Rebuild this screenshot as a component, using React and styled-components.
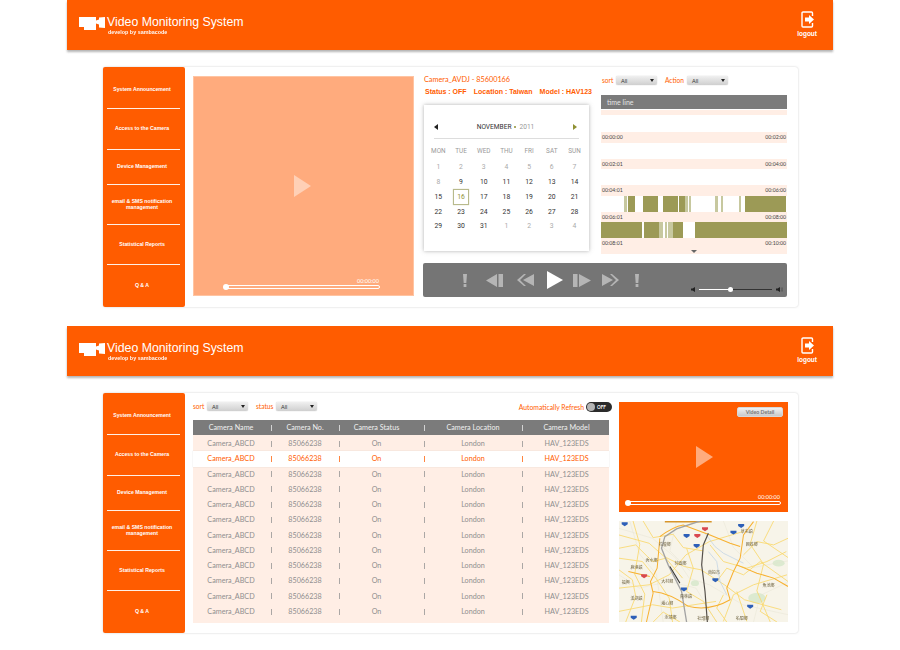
import React from 'react'
import styled, { createGlobalStyle } from 'styled-components'

const ORANGE = '#ff5c00'
const PINK = '#ffeee5'
const GOTHIC = `'Lato', 'Open Sans', sans-serif`
const ARIAL = `'Liberation Sans', Arial, sans-serif`

const GlobalStyle = createGlobalStyle`
  html, body {
    margin: 0;
    padding: 0;
    background: #fff;
    font-family: ${ARIAL};
  }
  * {
    box-sizing: border-box;
  }
`

const Page = styled.div`
  width: 900px;
  height: 650px;
  padding: 0 67px;
  overflow: hidden;
`

const Section = styled.section`
  margin-bottom: 19px;
`

const Header = styled.header`
  height: 50px;
  background: ${ORANGE};
  box-shadow: 0 2px 2px rgba(90, 90, 90, 0.45);
  display: flex;
  align-items: center;
  justify-content: space-between;
  padding: 0 16px 0 12px;
`

const Brand = styled.div`
  display: flex;
  align-items: flex-start;
  gap: 2px;
  margin-top: 1px;
`

const BrandLogo = styled.svg`
  display: block;
  flex: none;
  margin-top: 1px;
`

const BrandText = styled.div`
  color: #fff;
  line-height: 1;
`

const BrandTitle = styled.div`
  font-size: 12.3px;
  line-height: 13px;
`

const BrandSub = styled.div`
  font-size: 5.4px;
  font-weight: 700;
  line-height: 6px;
  margin: 0 0 0 1px;
  opacity: 0.95;
`

const Logout = styled.div`
  display: flex;
  flex-direction: column;
  align-items: center;
  color: #fff;
  font-size: 6.5px;
  line-height: 7px;
  font-weight: 700;
  gap: 2px;
  margin-top: -2px;
`

const Panel = styled.div`
  width: 695px;
  height: 240px;
  margin: 17px 0 0 36px;
  display: flex;
  border-radius: 3px;
  box-shadow: 0 0 2px rgba(150, 150, 150, 0.5);
  background: #fff;
`

const Sidebar = styled.nav`
  width: 82px;
  flex: none;
  background: ${ORANGE};
  border-radius: 2px;
  display: flex;
  flex-direction: column;
  padding: 0 5px 0 4px;
`

const SideItem = styled.a`
  height: ${({ $h }) => $h}px;
  display: flex;
  align-items: center;
  justify-content: center;
  text-align: center;
  color: #fff;
  font-size: 5.2px;
  font-weight: 700;
  line-height: 1;
  padding-top: ${({ $shift }) => $shift || 0}px;
  padding-right: 3px;
  border-bottom: ${({ $last }) => ($last ? 'none' : '1px solid #fff0e6')};
`

const Content = styled.div`
  flex: 1;
  display: flex;
  gap: ${({ $gap }) => $gap}px;
  padding: 9px 10px 9px 8px;
`

const VideoBox = styled.div`
  width: ${({ $w }) => $w}px;
  height: ${({ $h }) => $h}px;
  flex: none;
  display: flex;
  flex-direction: column;
  background: ${({ $bg }) => $bg};
  border: 1px solid ${({ $line }) => $line};
  padding: ${({ $pad }) => $pad};
  position: relative;
`

const PlayMark = styled.svg`
  display: block;
  margin: ${({ $top }) => $top}px auto 0;
`

const Spacer = styled.div`
  flex: 1;
`

const TimeCode = styled.div`
  align-self: flex-end;
  color: #fff;
  font-family: ${GOTHIC};
  font-size: 5.5px;
  line-height: 6px;
  margin: 0 1px 1px 0;
`

const Track = styled.div`
  height: 4px;
  border: 1px solid #fff;
  border-radius: 2px;
  position: relative;
`

const TrackKnob = styled.span`
  position: absolute;
  left: -3px;
  top: -2px;
  width: 6px;
  height: 6px;
  border-radius: 50%;
  background: #fff;
`

const DetailButton = styled.button`
  position: absolute;
  top: 4px;
  right: 4px;
  width: 46px;
  height: 10px;
  padding: 0;
  border: 1px solid #d8d8d8;
  border-radius: 2px;
  background: linear-gradient(#f2f2f2, #c9c9c9);
  color: #777;
  font-family: ${GOTHIC};
  font-size: 5.2px;
  font-weight: 700;
  line-height: 8px;
`

const Main = styled.div`
  width: 364px;
  display: flex;
  flex-direction: column;
  gap: 7px;
`

const MainTop = styled.div`
  display: flex;
  gap: 9px;
  height: 180px;
`

const InfoCol = styled.div`
  width: 169px;
  flex: none;
`

const InfoTitle = styled.div`
  color: ${ORANGE};
  font-family: ${GOTHIC};
  font-size: 7.3px;
  line-height: 9px;
  margin: -1px 0 0 1px;
`

const InfoLine = styled.div`
  display: flex;
  justify-content: space-between;
  color: ${ORANGE};
  font-size: 7px;
  font-weight: 700;
  line-height: 9px;
  margin: 3px 0 0 2px;
`

const Calendar = styled.div`
  width: 165px;
  height: 146px;
  margin: 9px 0 0 1px;
  background: #fff;
  box-shadow: 0 0 4px rgba(110, 110, 110, 0.55);
  padding: 17px 10px 0;
  font-family: 'Roboto', sans-serif;
`

const CalHead = styled.div`
  display: flex;
  align-items: center;
  justify-content: space-between;
  height: 10px;
  padding-right: 2px;
  font-size: 6.6px;
  color: #333;
`

const CalMonth = styled.div`
  display: flex;
  align-items: center;
  gap: 3px;
`

const CalYear = styled.span`
  color: #999;
`

const CalDot = styled.span`
  width: 2px;
  height: 2px;
  border-radius: 50%;
  background: #8f9133;
`

const CalArrow = styled.span`
  width: 0;
  height: 0;
  border-top: 3px solid transparent;
  border-bottom: 3px solid transparent;
  ${({ $right }) =>
    $right ? 'border-left: 4px solid #8f9133;' : 'border-right: 4px solid #222;'}
`

const CalRule = styled.div`
  height: 1px;
  background: #ddd;
  margin-top: 6px;
`

const CalGrid = styled.div`
  display: grid;
  grid-template-columns: repeat(7, 22.7px);
  margin: 6px 0 0 -7px;
  grid-auto-rows: 14.8px;
  font-size: 6.8px;
`

const WeekDay = styled.div`
  color: #999;
  font-size: 6.4px;
  text-align: center;
  line-height: 12px;
  height: 17px;
`

const Day = styled.div`
  display: flex;
  align-items: center;
  justify-content: center;
  color: ${({ $muted, $today }) => ($today ? '#8f9133' : $muted ? '#aaa' : '#333')};
  ${({ $today }) =>
    $today &&
    `
    width: 16px;
    height: 16px;
    justify-self: center;
    align-self: center;
    border: 1px solid #b8ba8c;
    box-shadow: 0 0 1px #c9cba8;
  `}
`

const TimeCol = styled.div`
  width: 186px;
  flex: none;
`

const FilterRow = styled.div`
  display: flex;
  align-items: center;
  height: 9px;
`

const FilterLabel = styled.span`
  color: ${ORANGE};
  font-family: ${GOTHIC};
  font-size: 6.6px;
  line-height: 9px;
  width: ${({ $w }) => $w}px;
  margin-left: ${({ $gap }) => $gap || 0}px;
`

const Select = styled.div`
  width: 41px;
  height: 9px;
  border-radius: 2px;
  background: linear-gradient(#f0f0f0, #cfcfcf);
  box-shadow: 0 0 1px #aaa;
  display: flex;
  align-items: center;
  justify-content: space-between;
  padding: 0 3px 0 5px;
  font-size: 5.5px;
  color: #333;
`

const SelectCaret = styled.span`
  width: 0;
  height: 0;
  border-left: 2px solid transparent;
  border-right: 2px solid transparent;
  border-top: 3px solid #222;
`

const TimeHead = styled.div`
  height: 14px;
  margin-top: 10px;
  background: #7b7b7b;
  color: #e4e4e4;
  font-family: ${GOTHIC};
  font-size: 7px;
  line-height: 14px;
  padding-left: 6px;
`

const TopStripe = styled.div`
  height: 5px;
  margin: 1px 0;
  background: ${PINK};
`

const Bar = styled.div`
  height: 16px;
  display: flex;
  background: #fff;
`

const Seg = styled.span`
  flex: none;
  width: ${({ $w }) => $w}px;
  background: ${({ $t }) => ($t === 'o' ? '#9c9a56' : $t === 'l' ? '#c7c89f' : 'transparent')};
`

const StampRow = styled.div`
  height: ${({ $h }) => $h || 11}px;
  background: ${PINK};
  display: flex;
  justify-content: space-between;
  padding: 2px 1px 0;
  color: #444;
  font-family: ${GOTHIC};
  font-size: 5.2px;
  line-height: 7px;
  position: relative;
`

const MoreArrow = styled.span`
  position: absolute;
  left: 90px;
  bottom: 1px;
  width: 0;
  height: 0;
  border-left: 3.5px solid transparent;
  border-right: 3.5px solid transparent;
  border-top: 3.5px solid #666;
`

const Controls = styled.div`
  height: 34px;
  background: #757575;
  border-radius: 2px;
  display: flex;
  align-items: center;
  position: relative;
  padding-left: 40px;
`

const CtrlIcon = styled.svg`
  display: block;
  flex: none;
  margin-left: ${({ $gap }) => $gap}px;
  fill: ${({ $on }) => ($on ? '#fff' : '#b5b5b5')};
`

const Volume = styled.div`
  position: absolute;
  left: 268px;
  bottom: 5px;
  display: flex;
  align-items: center;
  gap: 4px;
`

const VolumeTrack = styled.div`
  width: 73px;
  height: 1px;
  background: linear-gradient(to right, #fff 44%, #333 44%);
  position: relative;
`

const VolumeKnob = styled.span`
  position: absolute;
  left: 29px;
  top: -2px;
  width: 5px;
  height: 5px;
  border-radius: 50%;
  background: #fff;
`

const ListCol = styled.div`
  width: 416px;
  flex: none;
  display: flex;
  flex-direction: column;
`

const ListFilters = styled.div`
  display: flex;
  align-items: center;
  height: 9px;
  margin-bottom: 9px;
  position: relative;
`

const RefreshWrap = styled.div`
  margin-left: auto;
  margin-right: -3px;
  display: flex;
  align-items: center;
  gap: 2px;
  color: ${ORANGE};
  font-family: ${GOTHIC};
  font-size: 6.8px;
`

const Toggle = styled.div`
  width: 26px;
  height: 10px;
  border-radius: 5px;
  background: #2b2b2b;
  display: flex;
  align-items: center;
  padding: 0 1px;
  gap: 2px;
  color: #fff;
  font-size: 4.6px;
  font-weight: 700;
`

const ToggleKnob = styled.span`
  width: 8px;
  height: 8px;
  border-radius: 50%;
  background: #b5b5b5;
`

const COLS = '76px 4px 64px 4px 81px 4px 94px 4px 85px'

const TableHead = styled.div`
  display: grid;
  grid-template-columns: ${COLS};
  align-items: center;
  height: 15px;
  background: #7b7b7b;
  color: #f0f0f0;
  font-family: ${GOTHIC};
  font-size: 7.2px;
  line-height: 15px;
  text-align: center;
`

const TableBody = styled.div`
  background: ${PINK};
  height: 188px;
  padding-top: 1px;
`

const TableRow = styled.div`
  display: grid;
  grid-template-columns: ${COLS};
  align-items: center;
  height: 15.27px;
  font-family: ${GOTHIC};
  font-size: 7.2px;
  line-height: 15.27px;
  text-align: center;
  color: ${({ $active }) => ($active ? ORANGE : '#8f8f8f')};
  background: ${({ $active }) => ($active ? '#fff' : 'transparent')};
  box-shadow: ${({ $active }) => ($active ? '0 0 1px rgba(150,150,150,0.4)' : 'none')};
`

const Cell = styled.div`
  padding-right: ${({ $pr }) => $pr || 0}px;
  white-space: nowrap;
`

const ColSep = styled.span`
  justify-self: center;
  width: 1px;
  height: 6px;
  background: currentColor;
  opacity: 0.75;
`

const SideCol = styled.div`
  width: 169px;
  flex: none;
  display: flex;
  flex-direction: column;
  gap: 9px;
`

const MapFrame = styled.svg`
  display: block;
  width: 169px;
  height: 101px;
  background: #f7f4e9;
  filter: blur(0.25px);
`

const SIDE_ITEMS = [
  { h: 42, shift: 4, label: 'System Announcement' },
  { h: 41, label: 'Access to the Camera' },
  { h: 35, label: 'Device Management' },
  { h: 40, label: <>email &amp; SMS notification<br />management</> },
  { h: 40, shift: -2, label: 'Statistical Reports' },
  { h: 42, last: true, shift: -3, label: 'Q & A' },
]

function SideMenu() {
  return (
    <Sidebar>
      {SIDE_ITEMS.map((item, i) => (
        <SideItem key={i} $h={item.h} $last={item.last} $shift={item.shift}>
          <span>{item.label}</span>
        </SideItem>
      ))}
    </Sidebar>
  )
}

function TopBar() {
  return (
    <Header>
      <Brand>
        <BrandLogo width="26" height="13" viewBox="0 0 26 13" fill="#fff">
          <path d="M0 0h17v13H5v-3H0z" />
          <path d="M17 3.500l3-1v5l-3-1z" />
          <path d="M20 .5L26 0v11l-6-.5z" />
        </BrandLogo>
        <BrandText>
          <BrandTitle>Video Monitoring System</BrandTitle>
          <BrandSub>develop by sambacode</BrandSub>
        </BrandText>
      </Brand>
      <Logout>
        <svg width="13" height="17" viewBox="0 0 13 17" fill="none">
          <path d="M11.500 5V2a1 1 0 0 0-1-1H2a1 1 0 0 0-1 1v13a1 1 0 0 0 1 1h8.500a1 1 0 0 0 1-1v-3" stroke="#fff" strokeWidth="1.400" />
          <path d="M4 6.500h4V4l5 4.500L8 13v-2.500H4z" fill="#fff" />
        </svg>
        <span>logout</span>
      </Logout>
    </Header>
  )
}

function VideoSlider() {
  return (
    <>
      <TimeCode>00:00:00</TimeCode>
      <Track>
        <TrackKnob />
      </Track>
    </>
  )
}

const WEEK = ['MON', 'TUE', 'WED', 'THU', 'FRI', 'SAT', 'SUN']
const DAYS = [
  ...[1, 2, 3, 4, 5, 6, 7, 8].map(d => ({ d, muted: true })),
  ...Array.from({ length: 23 }, (_, i) => ({ d: i + 9, today: i + 9 === 16 })),
  ...[1, 2, 3, 4].map(d => ({ d, muted: true })),
]

function MonthCard() {
  return (
    <Calendar>
      <CalHead>
        <CalArrow />
        <CalMonth>
          NOVEMBER <CalDot /> <CalYear>2011</CalYear>
        </CalMonth>
        <CalArrow $right />
      </CalHead>
      <CalRule />
      <CalGrid>
        {WEEK.map(w => <WeekDay key={w}>{w}</WeekDay>)}
        {DAYS.map((x, i) => (
          <Day key={i} $muted={x.muted} $today={x.today}>{x.d}</Day>
        ))}
      </CalGrid>
    </Calendar>
  )
}

// [kind, width] runs of the timeline bars: o olive, l light olive, blank white
const RUNS_A = [
  [' ', 23], ['l', 3], [' ', 0.5], ['o', 7], [' ', 8], ['o', 15], [' ', 5], ['o', 15], [' ', 1.5], ['o', 6], ['l', 3], [' ', 0.5], ['l', 2],
  [' ', 24], ['l', 3], [' ', 3], ['l', 2], [' ', 16], ['l', 2], [' ', 4], ['o', 41],
]
const RUNS_B = [
  ['o', 41], [' ', 2], ['o', 15], ['l', 4], [' ', 2], ['l', 2], [' ', 1], ['l', 4.5], ['o', 10], [' ', 12.500], ['o', 92],
]

const STAMPS = [
  ['00:00:00', '00:02:00', []],
  ['00:02:01', '00:04:00', []],
  ['00:04:01', '00:06:00', []],
  ['00:06:01', '00:08:00', RUNS_A],
  ['00:08:01', '00:10:00', RUNS_B],
]

function TimeLine() {
  return (
    <TimeCol>
      <FilterRow>
        <FilterLabel $w={14} $gap={1}>sort</FilterLabel>
        <Select>All<SelectCaret /></Select>
        <FilterLabel $w={22} $gap={8}>Action</FilterLabel>
        <Select>All<SelectCaret /></Select>
      </FilterRow>
      <TimeHead>time line</TimeHead>
      <TopStripe />
      {STAMPS.map(([from, to, runs], i) => (
        <div key={from}>
          <Bar>
            {runs.map(([t, w], j) => <Seg key={j} $t={t} $w={w} />)}
          </Bar>
          <StampRow $h={i === 4 ? 16 : 10.500}>
            <span>{from}</span>
            <span>{to}</span>
            {i === 4 && <MoreArrow />}
          </StampRow>
        </div>
      ))}
    </TimeCol>
  )
}

function PlayerControls() {
  return (
    <Controls>
      <CtrlIcon $gap={0} width="4" height="13" viewBox="0 0 4 13"><path d="M0 0h4l-.7 9H.7zM.6 10h2.800v3H.6z" /></CtrlIcon>
      <CtrlIcon $gap={19} width="17" height="13" viewBox="0 0 17 13"><path d="M0 6.500L11 0v13zM12.500 0H17v13h-4.500z" /></CtrlIcon>
      <CtrlIcon $gap={14} width="17" height="12" viewBox="0 0 17 12"><path d="M0 6l7-6h2L3 6l6 6H7zM6 6l11-6v12z" /></CtrlIcon>
      <CtrlIcon $on $gap={13} width="16" height="18" viewBox="0 0 16 18"><path d="M0 0l16 9-16 9z" /></CtrlIcon>
      <CtrlIcon $gap={10} width="18" height="13" viewBox="0 0 18 13"><path d="M0 0h4.500v13H0zM6 0l12 6.500L6 13z" /></CtrlIcon>
      <CtrlIcon $gap={11} width="17" height="12" viewBox="0 0 17 12"><path d="M17 6l-7-6H8l6 6-6 6h2zM11 6L0 0v12z" /></CtrlIcon>
      <CtrlIcon $gap={16} width="4" height="13" viewBox="0 0 4 13"><path d="M0 0h4l-.7 9H.7zM.6 10h2.800v3H.6z" /></CtrlIcon>
      <Volume>
        <svg width="4" height="5" viewBox="0 0 4 5" fill="#222"><path d="M0 1.500h1.500L4 0v5L1.500 3.500H0z" /></svg>
        <VolumeTrack><VolumeKnob /></VolumeTrack>
        <svg width="7" height="5" viewBox="0 0 7 5" fill="#222"><path d="M0 1.500h1.500L4 0v5L1.500 3.500H0z" /><path d="M5 .8q1 1.700 0 3.400M6 .2q1.400 2.300 0 4.600" stroke="#444" strokeWidth=".5" fill="none" /></svg>
      </Volume>
    </Controls>
  )
}

const COLUMN_TITLES = ['Camera Name', 'Camera No.', 'Camera Status', 'Camera Location', 'Camera Model']

function RowCells({ cells }) {
  return cells.map((c, i) => (
    <React.Fragment key={i}>
      {i > 0 && <ColSep />}
      <Cell $pr={i === 2 ? 10 : 0}>{c}</Cell>
    </React.Fragment>
  ))
}

const ROW_CELLS = ['Camera_ABCD', '85066238', 'On', 'London', 'HAV_123EDS']

function CameraTable() {
  return (
    <>
      <TableHead><RowCells cells={COLUMN_TITLES} /></TableHead>
      <TableBody>
        {Array.from({ length: 12 }, (_, i) => (
          <TableRow key={i} $active={i === 1}><RowCells cells={ROW_CELLS} /></TableRow>
        ))}
      </TableBody>
    </>
  )
}

const SHIELDS_BLUE = [[45, 27], [230, 62], [260, 92], [370, 52], [393, 32], [222, 223], [316, 195], [420, 275], [72, 308]]
const SHIELDS_RED = [[262, 62], [285, 42], [103, 183]]
const TOWNS = [
  [165, 92, '花壇鄉'], [212, 150, '芬園鄉'], [125, 140, '秀水鄉'], [172, 205, '大村鄉'],
  [228, 250, '員林鎮'], [80, 255, '溪湖鎮'], [172, 270, '埔心鄉'], [182, 312, '永靖鄉'],
  [312, 178, '南投市'], [410, 55, '草屯鎮'], [425, 92, '國姓鄉'], [475, 216, '魚池鄉'],
  [395, 315, '名間鄉'], [280, 316, '社頭鄉'], [48, 208, '福興'], [80, 162, '鹿港鎮'],
]

function RoadMap() {
  return (
    <MapFrame viewBox="28 18 505 304" preserveAspectRatio="none">
      <g fill="#dcead0">
        <ellipse cx="255" cy="205" rx="12" ry="9" />
        <ellipse cx="505" cy="145" rx="18" ry="10" />
        <ellipse cx="440" cy="250" rx="26" ry="16" />
      </g>
      <g fill="none" stroke="#e4e0cf" strokeWidth="1.200">
        <path d="M28 40l100 30 70 60 40 60 60 20 100 60 135 30" />
        <path d="M60 18l30 100 50 60 20 144" />
        <path d="M340 18l30 80 60 60 103-20" />
        <path d="M28 180l60 40 90-20 80 20 60 100" />
        <path d="M430 322l20-80 83-40" />
        <path d="M200 18l-20 90 60 60" />
      </g>
      <g fill="none" stroke="#f9d96f" strokeWidth="2.600">
        <path d="M28 60l90 25 45 40 60 30 50 10 70 45 60 45 110 30" />
        <path d="M28 130l70 10 40 50 40 60 10 72" />
        <path d="M70 18l20 70-15 90 30 60-10 84" />
        <path d="M230 100l20 60-20 70 50 30 40 62" />
        <path d="M300 90l40 50 70 20 60-20 58-30" />
        <path d="M440 18l-20 70 40 60-20 80 40 94" />
        <path d="M340 320l30-80 60-30 100-30" />
        <path d="M28 220l90-10 60-30 50-60 70-40 100-30" />
        <path d="M490 18l-30 60 73 50" />
        <path d="M28 290l100-20 60 10 130-20" />
        <path d="M380 230l30 90" />
        <path d="M100 18l30 50 60-10 30 40 60 10" />
        <path d="M28 100l50-10 50 50 40-10 50 60" />
        <path d="M320 200l30-40 50 20 50-40 83 60" />
        <path d="M470 240l-20 50 50 32" />
        <path d="M130 322l30-30 50 30" />
        <path d="M340 240l-20 40 30 42" />
        <path d="M400 120l40-40 50 10 43-20" />
        <path d="M28 165l40 30 10 50-30 77" />
      </g>
      <g fill="none" stroke="#b9cfe4" strokeWidth="2">
        <path d="M285 55l30 40 25 20 60 30" />
        <path d="M295 110l25 30 10 60 20 40" />
      </g>
      <g fill="none" stroke="#f7b02e" strokeWidth="3">
        <path d="M122 270l8-35-8-35 20-40 8-90" />
        <path d="M130 230q50 5 105 45 65 15 125-20l-10-35 20-50 20-40 10-70 30-40" />
        <path d="M380 150l60 25 50 15 43 25" />
        <path d="M56 170l64 15" />
        <path d="M150 65q40-30 70-35l80 30 60 25 30 10" />
        <path d="M110 322l12-52" />
      </g>
      <path d="M165 20h140" stroke="#d8952a" strokeWidth="5" fill="none" />
      <path d="M230 322l-15-92-40-80-20-50 10-35 35-23 70-24" stroke="#a3a3a3" strokeWidth="4" fill="none" />
      <path d="M180 155l30 50" stroke="#333" strokeWidth="3" fill="none" />
      <path d="M292 322l-7-92-10-80 5-60 15-35" stroke="#55504a" strokeWidth="3.500" fill="none" />
      {SHIELDS_BLUE.map(([x, y]) => (
        <path key={`${x}-${y}`} d={`M${x - 9} ${y - 5}h18v6l-9 6-9-6z`} fill="#2d5fb8" />
      ))}
      {SHIELDS_RED.map(([x, y]) => (
        <path key={`${x}-${y}`} d={`M${x - 9} ${y - 5}h18v6l-9 6-9-6z`} fill="#d8484f" />
      ))}
      <g fill="#6b5f3c" fontSize="12" fontFamily="'Noto Sans CJK TC', sans-serif">
        {TOWNS.map(([x, y, t]) => (
          <text key={t} x={x} y={y} textAnchor="middle">{t}</text>
        ))}
      </g>
    </MapFrame>
  )
}

export default function App() {
  return (
    <Page>
      <GlobalStyle />
      <Section>
        <TopBar />
        <Panel>
          <SideMenu />
          <Content $gap={9}>
            <VideoBox $w={221} $h={220} $bg="#ffab7d" $line="#ffc4a2" $pad="0 33px 6px 31px">
              <PlayMark $top={98} width="17" height="22" viewBox="0 0 17 22" fill="#ffd0b6"><path d="M0 0l17 11L0 22z" /></PlayMark>
              <Spacer />
              <VideoSlider />
            </VideoBox>
            <Main>
              <MainTop>
                <InfoCol>
                  <InfoTitle>Camera_AVDJ - 85600166</InfoTitle>
                  <InfoLine>
                    <span>Status : OFF</span>
                    <span>Location : Taiwan</span>
                    <span>Model : HAV123</span>
                  </InfoLine>
                  <MonthCard />
                </InfoCol>
                <TimeLine />
              </MainTop>
              <PlayerControls />
            </Main>
          </Content>
        </Panel>
      </Section>
      <Section>
        <TopBar />
        <Panel>
          <SideMenu />
          <Content $gap={10}>
            <ListCol>
              <ListFilters>
                <FilterLabel $w={14}>sort</FilterLabel>
                <Select>All<SelectCaret /></Select>
                <FilterLabel $w={20} $gap={8}>status</FilterLabel>
                <Select>All<SelectCaret /></Select>
                <RefreshWrap>
                  Automatically Refresh
                  <Toggle><ToggleKnob />OFF</Toggle>
                </RefreshWrap>
              </ListFilters>
              <CameraTable />
            </ListCol>
            <SideCol>
              <VideoBox $w={169} $h={110} $bg={ORANGE} $line={ORANGE} $pad="0 6px 6px 7px">
                <DetailButton>Video Detail</DetailButton>
                <PlayMark $top={43} width="17" height="22" viewBox="0 0 17 22" fill="#ffab7d"><path d="M0 0l17 11L0 22z" /></PlayMark>
                <Spacer />
                <VideoSlider />
              </VideoBox>
              <RoadMap />
            </SideCol>
          </Content>
        </Panel>
      </Section>
    </Page>
  )
}
